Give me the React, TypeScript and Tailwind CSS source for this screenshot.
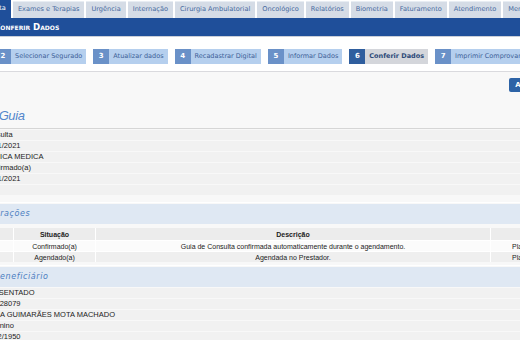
import React from "react";

// ─── Data ─────────────────────────────────────────────────────────────────────

const tabs = [
  "Exames e Terapias",
  "Urgência",
  "Internação",
  "Cirurgia Ambulatorial",
  "Oncológico",
  "Relatórios",
  "Biometria",
  "Faturamento",
  "Atendimento",
  "Mensagens",
];

const steps = [
  { n: 2, label: "Selecionar Segurado" },
  { n: 3, label: "Atualizar dados" },
  { n: 4, label: "Recadastrar Digital" },
  { n: 5, label: "Informar Dados" },
  { n: 6, label: "Conferir Dados", active: true },
  { n: 7, label: "Imprimir Comprovante" },
];

const guiaRows = [
  ["Tipo de Guia:", "Consulta"],
  ["Data de Emissão:", "14/01/2021"],
  ["Especialidade:", "CLINICA MEDICA"],
  ["Situação:", "Confirmado(a)"],
  ["Data de Validade:", "14/01/2021"],
  ["", ""],
];

const historico = [
  ["14/01/2021 09:12", "Confirmado(a)", "Guia de Consulta confirmada automaticamente durante o agendamento.", "Plataforma"],
  ["14/01/2021 09:11", "Agendado(a)", "Agendada no Prestador.", "Plataforma"],
];

const beneficiarioRows = [
  ["Tipo:", "APOSENTADO"],
  ["Matrícula:", "000128079"],
  ["Nome:", "LUCIA GUIMARÃES MOTA MACHADO"],
  ["Sexo:", "Feminino"],
  ["Data de Nascimento:", "12/02/1950"],
];

// ─── Pieces ───────────────────────────────────────────────────────────────────

function InfoRow({ label, value }: { label: string; value: string }) {
  return (
    <div className="flex h-[10px] items-center bg-[#f1f1f1] mb-[1px] text-[7.5px] leading-none text-[#222]">
      <span className="w-[163px] shrink-0 pr-[8px] text-right font-bold">{label}</span>
      <span>{value}</span>
    </div>
  );
}

function SectionHeader({ title, offset }: { title: string; offset: string }) {
  return (
    <div className="border-t border-white">
      <div className="mt-[1px] h-[20px] flex items-center bg-[#dfe8f3]">
        <span
          className={`${offset} font-['DejaVu_Sans',sans-serif] italic text-[8px] tracking-[0.6px] text-[#4c7ec1]`}
        >
          {title}
        </span>
      </div>
    </div>
  );
}

// ─── Page ─────────────────────────────────────────────────────────────────────

export default function App() {
  return (
    <div className="w-[520px] h-[340px] overflow-hidden bg-white font-['DejaVu_Sans',sans-serif]">
      {/* Top tabs */}
      <div className="flex h-[18px] items-end gap-[2px] whitespace-nowrap">
        <div className="-ml-[28px] h-[18px] px-[5px] flex items-center bg-[#1f4f9a] text-white text-[6.6px]">
          Consulta
        </div>
        {tabs.map((t) => (
          <div
            key={t}
            className="h-[17px] px-[5px] flex items-center bg-[#d5dce6] border-t border-[#e8edf3] text-[6.6px] text-[#46699e]"
          >
            {t}
          </div>
        ))}
      </div>

      {/* Title bar */}
      <div className="h-[19px] flex items-center bg-[#1f4f9a] border-b border-[#c9cfd9]">
        <span className="-ml-[6px] text-white font-bold text-[8.6px] [font-variant:small-caps]">
          Conferir Dados
        </span>
      </div>

      {/* Wizard steps */}
      <div className="mt-[12px] -ml-[5px] flex gap-[7px] whitespace-nowrap">
        {steps.map((s) => (
          <div key={s.n} className="flex h-[15px]">
            <div
              className={`w-[16px] flex items-center justify-center text-white font-bold text-[7px] ${
                s.active ? "bg-[#2f5e9e]" : "bg-[#6a91c8]"
              }`}
            >
              {s.n}
            </div>
            <div
              className={`px-[4px] flex items-center text-[6.5px] ${
                s.active
                  ? "bg-[#d4d6db] text-[#2c4a78] font-bold"
                  : "bg-[#b5cfee] text-[#3d5f98]"
              }`}
            >
              {s.label}
            </div>
          </div>
        ))}
      </div>

      {/* Content */}
      <div className="mt-[7px] border-t border-[#dadade] bg-[#f8f8f8] h-[300px]">
        <div className="-ml-[180px] w-[760px] font-['Liberation_Sans',Arial,sans-serif]">
          <div className="pt-[6px] pr-[27px] flex justify-end">
            <button className="h-[14px] px-[6px] rounded-[2px] bg-[#2d63a6] text-white font-bold text-[7px] font-['DejaVu_Sans',sans-serif]">
              Avançar
            </button>
          </div>

          <div className="mt-[11px] pl-[123px] pb-[1px] border-b border-[#d6d6d6]">
            <span className="italic text-[13px] leading-[14px] tracking-[-0.4px] text-[#5387cc]">
              Dados da Guia
            </span>
          </div>
          <div className="mt-[1px]">
            {guiaRows.map(([l, v], i) => (
              <InfoRow key={i} label={l} value={v} />
            ))}
          </div>

          <div className="mt-[7px]">
            <SectionHeader title="Alterações" offset="ml-[162px]" />
          </div>

          <div className="mt-[4px] grid grid-cols-[193px_81px_394px_1fr] gap-[1px] bg-white text-[7px] leading-none text-[#222]">
            <div className="h-[12px] flex items-center justify-center bg-[#ececec] font-bold">Data/Hora</div>
            <div className="h-[12px] flex items-center justify-center bg-[#ececec] font-bold">Situação</div>
            <div className="h-[12px] flex items-center justify-center bg-[#ececec] font-bold">Descrição</div>
            <div className="h-[12px] flex items-center justify-center bg-[#ececec] font-bold">Origem</div>
            {historico.map((r, i) =>
              r.map((c, j) => (
                <div
                  key={`${i}-${j}`}
                  className={`h-[10px] flex items-center ${j === 3 ? "pl-[21px]" : "justify-center"} ${
                    i % 2 === 0 ? "bg-[#fbfbfb]" : "bg-[#efefef]"
                  }`}
                >
                  {c}
                </div>
              ))
            )}
          </div>

          <div className="mt-[3px]">
            <SectionHeader title="Beneficiário" offset="ml-[174px]" />
          </div>
          <div className="mt-[1px]">
            {beneficiarioRows.map(([l, v], i) => (
              <InfoRow key={i} label={l} value={v} />
            ))}
          </div>
        </div>
      </div>
    </div>
  );
}
